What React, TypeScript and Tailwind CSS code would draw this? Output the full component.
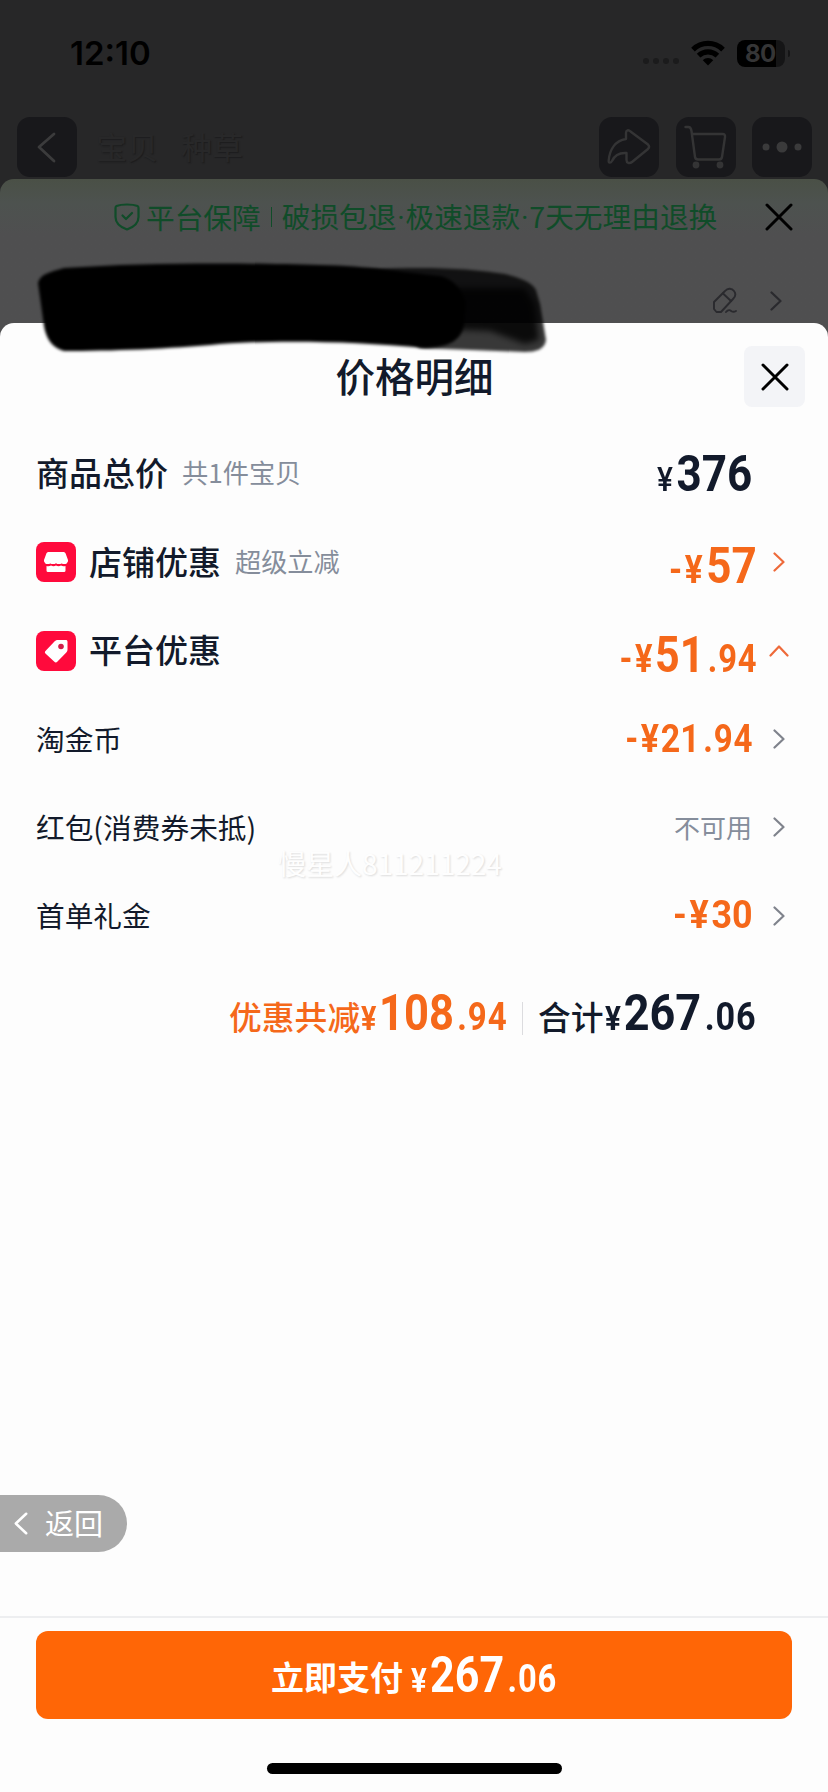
import type { ReactNode } from 'react';

const stroke = { fill: 'none', strokeLinecap: 'round', strokeLinejoin: 'round' } as const;

function Chevron({ className }: { className: string }) {
  return (
    <svg viewBox="0 0 12 20" width="12" height="20" className={className} {...stroke} stroke="currentColor" strokeWidth="2.2">
      <path d="M1.5 1.5 10.5 10 1.5 18.5" />
    </svg>
  );
}

function Close() {
  return (
    <svg viewBox="0 0 28 28" width="28" height="28" {...stroke} stroke="#000" strokeWidth="3">
      <path d="M2 2 26 26M26 2 2 26" />
    </svg>
  );
}

function StatusBar() {
  return (
    <div className="flex h-[117px] items-start justify-between pt-[37px] pr-[38px] pl-[70px]">
      <span className="font-['Inter'] text-[33px] leading-[32px] font-semibold text-black">12:10</span>
      <div className="flex h-8 items-center">
        <svg viewBox="0 0 38 8" width="38" height="8" fill="#1b1b1c" className="mt-4">
          <circle cx="4" cy="4" r="3" />
          <circle cx="14" cy="4" r="3" />
          <circle cx="24" cy="4" r="3" />
          <circle cx="34" cy="4" r="3" />
        </svg>
        <svg viewBox="0 0 34 26" width="34" height="26" fill="none" stroke="#000" strokeWidth="5.2" className="ml-[11px]">
          <path d="M2 9.6C10.5 1.4 23.5 1.4 32 9.6" />
          <path d="M7.6 15.6C13 10.5 21 10.5 26.4 15.6" />
          <path d="M11.8 20.2C14.8 17.4 19.2 17.4 22.2 20.2L17 25.4Z" fill="#000" stroke="none" />
        </svg>
        <div className="ml-[12px] flex h-[27px] w-[48px] items-center rounded-[8px] bg-linear-to-r from-black from-81% to-[#151516] to-81%">
          <span className="pl-[8px] font-['Inter'] text-[24px] leading-[27px] font-bold tracking-[-0.5px] text-[#353536]">80</span>
        </div>
        <div className="ml-[3px] h-[7px] w-[2px] rounded-r bg-[#151516]" />
      </div>
    </div>
  );
}

function NavButton({ children }: { children: ReactNode }) {
  return <div className="flex size-[60px] items-center justify-center rounded-[13px] bg-[#18181b]">{children}</div>;
}

function NavBar() {
  return (
    <div className="flex h-[62px] items-start pr-[16px] pl-[17px]">
      <NavButton>
        <svg viewBox="0 0 60 60" width="60" height="60" {...stroke} stroke="#3b3b3c" strokeWidth="2.8">
          <path d="M37 17 22 30 37 44" />
        </svg>
      </NavButton>
      <span className="ml-[19px] flex-1 pt-[9px] text-[31px] leading-[40px] text-[#282829] [text-shadow:1px_1px_1px_#1d1d1e] [word-spacing:16px]">
        宝贝 种草
      </span>
      <div className="flex gap-[16.500px]">
        <NavButton>
          <svg viewBox="0 0 60 60" width="60" height="60" {...stroke} stroke="#343435" strokeWidth="2.4">
            <path d="M27 16c0-3 2.500-3.500 4.500-1.500L49 27.500c1.500 1.500 1.500 3 0 4.500L33 45c-2.500 2-5.500 1-5.500-2V36c-7-.5-12 2.500-14.500 8-1.500 2.500-3.500 2-3.300-.5C10.500 33 16 23.500 27 22Z" />
          </svg>
        </NavButton>
        <NavButton>
          <svg viewBox="0 0 60 60" width="60" height="60" {...stroke} stroke="#343435" strokeWidth="2.4">
            <path d="M9.500 10h3c2 0 2.500 1 3 4l3.500 26c.3 2 1 2.500 3 2.500h21c2 0 2.700-.5 3-2.500l3-20c.3-2-.5-3-2.500-3H16" />
            <circle cx="20" cy="48" r="2.200" fill="#343435" />
            <circle cx="44" cy="48" r="2.200" fill="#343435" />
          </svg>
        </NavButton>
        <NavButton>
          <svg viewBox="0 0 60 60" width="60" height="60" fill="#3a3a3b">
            <circle cx="14" cy="30" r="3.500" />
            <circle cx="30" cy="30" r="5.500" />
            <circle cx="46" cy="30" r="3.500" />
          </svg>
        </NavButton>
      </div>
    </div>
  );
}

function Dot() {
  return <span className="inline-block w-[9px] text-center font-['Roboto']">·</span>;
}

function GuaranteePanel() {
  return (
    <div className="h-[160px] shrink-0 rounded-t-[14px] bg-linear-to-b from-[#4a5046] from-0% via-[#4d524f] via-15% to-[#4f4f50] to-35%">
      <div className="flex h-[76px] items-center pl-[114px] text-[28.700px] text-[#104c29]">
        <svg viewBox="0 0 26 28" width="26" height="28" {...stroke} stroke="#104c29" strokeWidth="2.200" className="mr-[6px]">
          <path d="M13 1.500c-4 0-8 .5-10.500 1.500C1.700 3.400 1.500 4 1.500 5v9c0 6 4.500 10 11.500 12.500C20 24 24.500 20 24.500 14V5c0-1-.2-1.600-1-2C21 2 17 1.500 13 1.500Z" />
          <path d="m8.500 12.500 3.500 3.500 6-6" />
        </svg>
        <span>平台保障</span>
        <div className="mx-[10px] h-5 w-px bg-[#104c29]" />
        <span className="whitespace-nowrap">
          破损包退
          <Dot />
          极速退款
          <Dot />
          7天无理由退换
        </span>
        <div className="mr-[35px] ml-auto">
          <Close />
        </div>
      </div>
      <div className="flex h-[84px] items-center justify-end pt-[8px] pr-[46px] text-[#2a2a2e]">
        <svg viewBox="0 0 26 28" width="26" height="28" {...stroke} stroke="#2a2a2e" strokeWidth="1.900">
          <path d="M2 15 13 4c3-3.500 7-2.500 9 0s1.500 5.500-1 8L9 25H4.500L2 22Z" />
          <path d="m11 6.500 8 7.500M14 25c2.500-3 4-2 5.500-.8 1.500 1 2.800.8 4.500-.2" />
        </svg>
        <Chevron className="ml-[32px]" />
      </div>
    </div>
  );
}

// soft marker stroke hiding the address line
function Redaction() {
  return (
    <svg viewBox="0 0 540 110" width="540" height="110" className="pointer-events-none absolute top-[254px] left-[20px]">
      <defs>
        <filter id="soft" x="-5%" y="-15%" width="110%" height="130%">
          <feGaussianBlur stdDeviation="1.800" />
        </filter>
        <filter id="softer" x="-10%" y="-15%" width="120%" height="130%">
          <feGaussianBlur stdDeviation="3" />
        </filter>
      </defs>
      <path
        d="M300 20C380 11 440 13 485 20 500 24 512 28 516 36L520 50 526 86C525 95 516 98 505 98L400 94Z"
        fill="#000"
        fillOpacity=".78"
        filter="url(#soft)"
      />
      <path d="M400 34 505 34 515 50 519 86 505 90 470 77 400 74Z" fill="#000" fillOpacity=".8" filter="url(#softer)" />
      <path
        d="M18 29C20 20 30 18 44 14 130 8 230 9 300 11 350 12 380 18 420 22 436 26 442 38 446 48L444 70C442 86 430 93 405 94 330 87 260 86 200 90 150 95 90 97 44 97 32 94 26 84 24 72Z"
        fill="#000"
        filter="url(#soft)"
      />
    </svg>
  );
}

type AmountProps = { value: string; cents?: string; minus?: boolean; size: string; yen: string };

// Price with a smaller currency sign and cents
function Amount({ value, cents, minus, size, yen }: AmountProps) {
  return (
    <span className={`inline-flex items-baseline font-['Roboto'] leading-none font-bold whitespace-nowrap ${size}`}>
      {minus && <span className="mr-[3px] text-[38px]">-</span>}
      <span className={yen}>¥</span>
      <span>{value}</span>
      {cents && <span className="ml-[4px] text-[38px] tracking-[1px]">.{cents}</span>}
    </span>
  );
}

function ShopIcon() {
  return (
    <svg viewBox="0 0 40 40" width="40" height="40" className="mr-[13px]">
      <rect width="40" height="40" rx="8" fill="#ff0a3c" />
      <path d="M13 10h14c1.500 0 2.300.6 2.800 2l2.200 6c.8 3-3.500 4.500-5.200 2.200-1.800 2.200-5 2.200-6.800 0-1.800 2.200-5 2.200-6.800 0-1.700 2.300-6 .8-5.200-2.200l2.200-6c.5-1.400 1.300-2 2.800-2Z" fill="#fff" />
      <path d="M9 18h22v3.200q-2.800 1.800-5.500 0-2.800 1.800-5.500 0-2.800 1.800-5.500 0-2.700 1.800-5.500 0Z" fill="#fff" />
      <path d="M10.500 24q2.500.8 4.500-.5 2.500 1.500 5 0 2.500 1.500 5 0 2 1.300 4.500.5V28.500q0 1.500-1.500 1.500H12q-1.500 0-1.500-1.500Z" fill="#fff" />
    </svg>
  );
}

function TagIcon() {
  return (
    <svg viewBox="0 0 40 40" width="40" height="40" className="mr-[13px]">
      <rect width="40" height="40" rx="8" fill="#ff0a3c" />
      <path d="M22 9h7.500c1.500 0 2 .6 2 2v7.500c0 1.200-.3 2-1.200 2.900L21.500 30.500c-1.200 1.200-2.200 1.200-3.400 0L9.700 22.800c-1.100-1-1.100-2 0-3l9-9.500c1-1 1.900-1.300 3.300-1.300Z" fill="#fff" />
      <circle cx="25" cy="15.500" r="2.800" fill="#d21d48" />
    </svg>
  );
}

function Row({ label, children }: { label: ReactNode; children: ReactNode }) {
  return (
    <div className="flex h-[88.300px] items-center justify-between pr-[43px] pl-[36px]">
      <div className="flex items-center">{label}</div>
      <div className="flex items-center">{children}</div>
    </div>
  );
}

const title = 'text-[33px] font-medium pb-[2px]';
const note = 'ml-[14px] pb-[2px] text-[26.200px] text-[#858d9b]';
const sub = 'pb-[2px] text-[28.700px]';

function PriceSheet() {
  return (
    <div className="flex flex-1 flex-col rounded-t-[14px] bg-[#fdfdfd]">
      <div className="flex h-[107px] items-center pr-[23px] pl-[85px]">
        <h1 className="flex-1 pb-[3px] text-center text-[39.500px] font-medium">价格明细</h1>
        <div className="flex size-[61px] items-center justify-center rounded-[8px] bg-[#f3f4f7]">
          <Close />
        </div>
      </div>

      <Row label={<><span className={title}>商品总价</span><span className={note}>共1件宝贝</span></>}>
        <div className="mr-[33px] origin-right scale-x-[0.88]">
          <Amount value="376" size="text-[50px]" yen="mr-[4px] text-[34px] font-medium" />
        </div>
      </Row>
      <Row label={<><ShopIcon /><span className={title}>店铺优惠</span><span className={note}>超级立减</span></>}>
        <div className="mr-[16px] origin-right scale-x-[0.88] pt-[8px] text-[#f5681a]">
          <Amount minus value="57" size="text-[50px]" yen="mr-[4px] text-[38px]" />
        </div>
        <Chevron className="text-[#ee6a3a]" />
      </Row>
      <Row label={<><TagIcon /><span className={title}>平台优惠</span></>}>
        <div className="mr-[12px] origin-right scale-x-[0.86] pt-[8px] text-[#f5681a]">
          <Amount minus value="51" cents="94" size="text-[50px]" yen="mr-[3px] text-[38px]" />
        </div>
        <svg viewBox="0 0 20 12" width="20" height="12" {...stroke} stroke="#ee6a3a" strokeWidth="2.200" className="-mr-[4px]">
          <path d="M1.500 10.500 10 1.500 18.500 10.500" />
        </svg>
      </Row>
      <Row label={<span className={sub}>淘金币</span>}>
        <div className="mr-[20px] origin-right scale-x-[0.87] text-[#f5681a]">
          <Amount minus value="21" cents="94" size="text-[39px]" yen="mr-[2px]" />
        </div>
        <Chevron className="text-[#7f838c]" />
      </Row>
      <Row label={<span className={sub}>红包(消费券未抵)</span>}>
        <span className="mr-[21px] pb-[2px] text-[26px] text-[#858d9b]">不可用</span>
        <Chevron className="text-[#7f838c]" />
      </Row>
      <Row label={<span className={sub}>首单礼金</span>}>
        <div className="mr-[20px] origin-right scale-x-[0.92] text-[#f5681a]">
          <Amount minus value="30" size="text-[39px]" yen="mr-[3px]" />
        </div>
        <Chevron className="text-[#7f838c]" />
      </Row>

      <div className="flex h-[110px] items-baseline justify-end pt-[28px] pr-[71px] whitespace-nowrap">
        <div className="flex w-[280px] items-baseline text-[#f5681a]">
          <span className="w-[132px] text-[32.800px] font-medium">优惠共减</span>
          <div className="w-[148px] origin-left scale-x-[0.87]">
            <Amount value="108" cents="94" size="text-[50px]" yen="mr-[3px] text-[33px]" />
          </div>
        </div>
        <div className="mt-[14px] mr-[15px] ml-[13px] h-[33px] w-px self-start bg-[#dcdcdf]" />
        <div className="flex w-[219px] items-baseline">
          <span className="w-[67px] text-[32.800px] font-medium">合计</span>
          <div className="w-[152px] origin-left scale-x-[0.9]">
            <Amount value="267" cents="06" size="text-[50px]" yen="mr-[3px] text-[33px]" />
          </div>
        </div>
      </div>

      <div className="mt-auto mb-[64px] flex h-[57px] w-[127px] items-center rounded-r-full bg-[#aaaaaa] pl-[14px] text-white">
        <Chevron className="h-[23px] w-[14px] -scale-x-100" />
        <span className="ml-[17px] pb-[2px] text-[29px]">返回</span>
      </div>

      <div className="h-[176px] border-t-2 border-[#edeef0] px-[36px] pt-[13px]">
        <button className="flex h-[88px] w-full items-center justify-center rounded-[12px] bg-[#ff6606] pl-[24px] text-white">
          <span className="pt-[4px] text-[33px] font-bold">立即支付</span>
          <span className="ml-[8px] origin-left scale-x-[0.86]">
            <Amount value="267" cents="06" size="text-[50px]" yen="mr-[4px] text-[34px]" />
          </span>
        </button>
        <div className="mx-auto mt-[44px] h-[11px] w-[295px] rounded-full bg-black" />
      </div>
    </div>
  );
}

export default function App() {
  return (
    <div className="relative flex h-[1792px] w-[828px] flex-col overflow-hidden bg-[#272728] font-['Noto_Sans_CJK_SC',sans-serif] leading-normal text-[#121a2b]">
      <StatusBar />
      <NavBar />
      {/* the dimmed panel runs on beneath the rounded corners of the sheet */}
      <GuaranteePanel />
      <div className="-mt-[16px] flex flex-1 flex-col">
        <PriceSheet />
      </div>
      <Redaction />
      <span className="pointer-events-none absolute top-[842px] left-[278px] text-[28px] text-[#fefefe] [text-shadow:1px_1px_2px_#dcdcdc]">
        慢星人811211224
      </span>
    </div>
  );
}
